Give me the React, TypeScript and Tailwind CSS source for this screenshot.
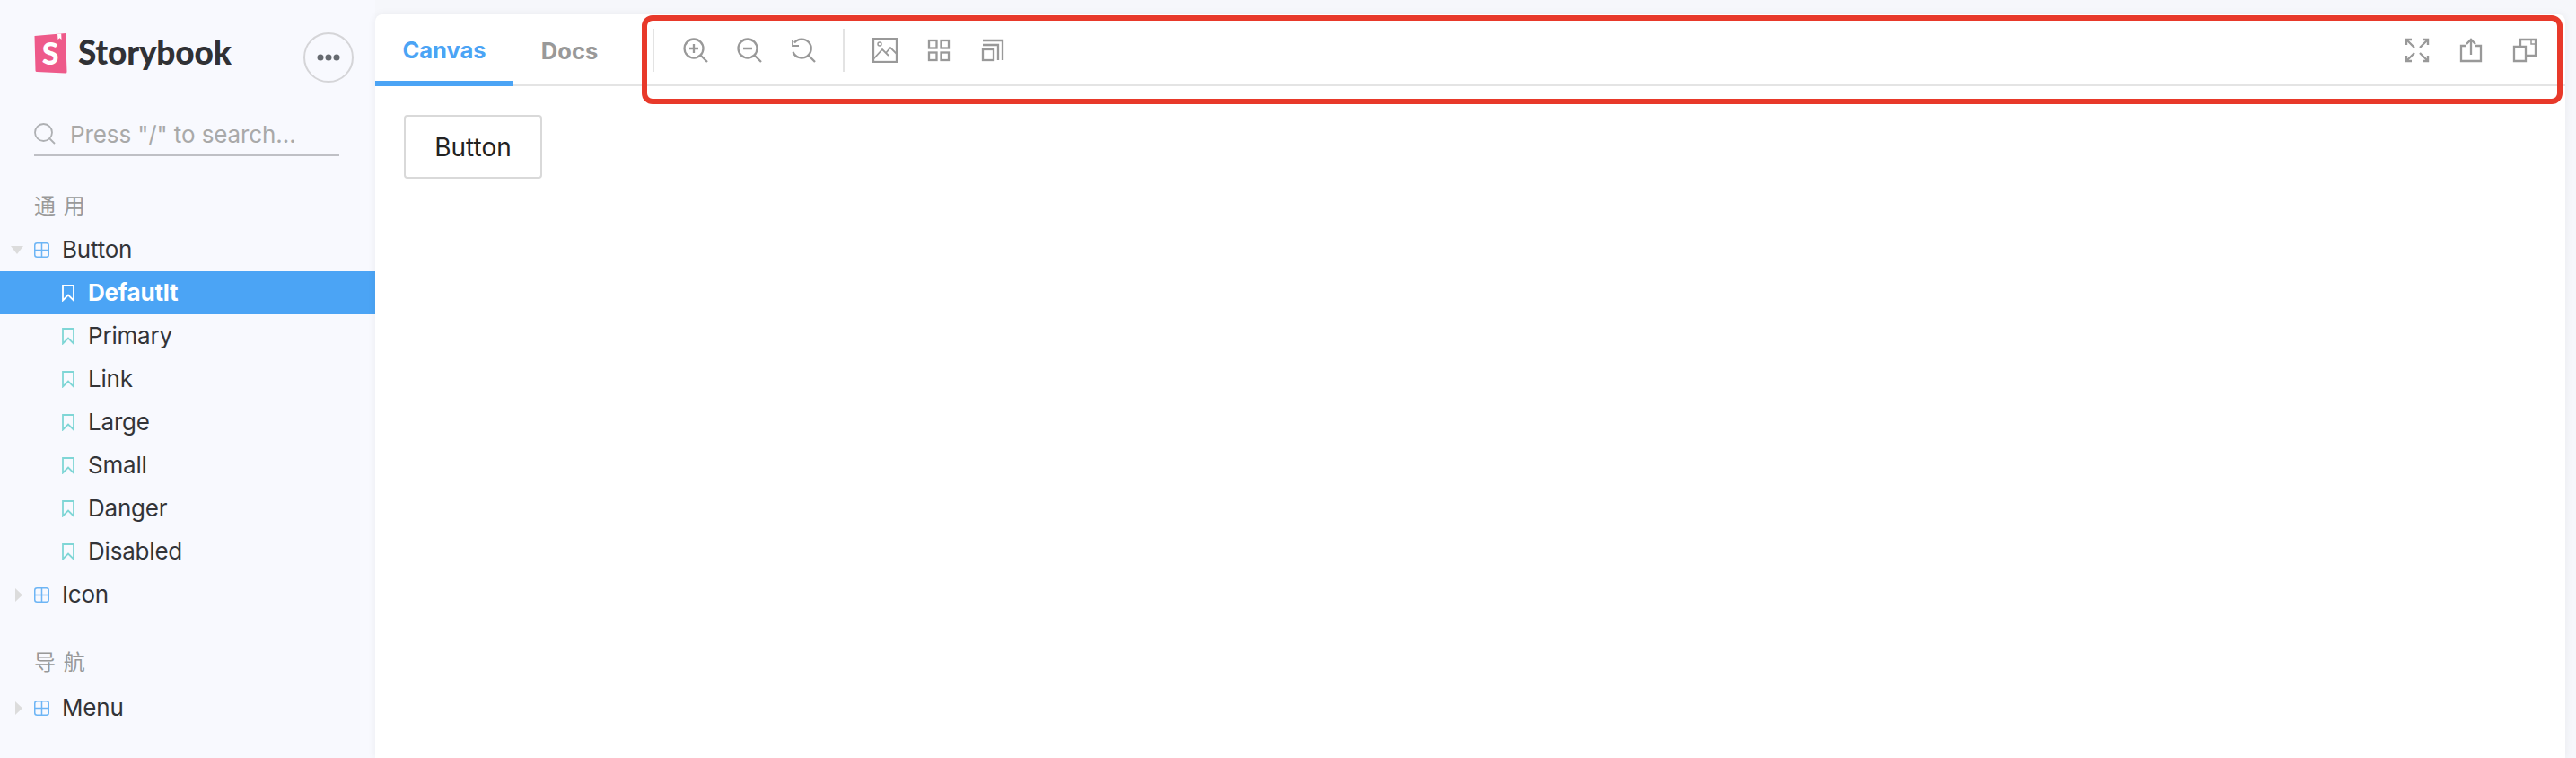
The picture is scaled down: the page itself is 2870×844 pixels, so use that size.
import type { ReactNode } from 'react'

const STORIES = ['Primary', 'Link', 'Large', 'Small', 'Danger', 'Disabled']

function ToolIcon({ children }: { children: ReactNode }) {
  return (
    <svg width="28" height="28" viewBox="0 0 28 28" fill="none" stroke="#999999" strokeWidth="2.3" className="shrink-0">
      {children}
    </svg>
  )
}

function Logo() {
  return (
    <svg width="37" height="46" viewBox="0 0 37 46" className="shrink-0">
      <path d="M0.5 4 L35 1 L36.5 44 Q36.5 45.5 35 45.5 L3 44 Q1.5 44 1.5 42.5 Z" fill="#ee5a8a" />
      <path d="M26 1.8 L26.5 8 L28.5 6.2 L30.5 8 L30.2 1.4 Z" fill="#ffffff" />
      <text x="18" y="36" textAnchor="middle" fontSize="34" fontWeight="900" fill="#ffffff" fontFamily="Lato, sans-serif">S</text>
    </svg>
  )
}

function GridIcon() {
  return (
    <svg width="17" height="17" viewBox="0 0 17 17" fill="none" stroke="#6db5f5" strokeWidth="1.5" className="shrink-0">
      <rect x="0.75" y="0.75" width="15.5" height="15.5" rx="2.5" />
      <path d="M8.5 1V16M1 8.5H16" />
    </svg>
  )
}

function Bookmark({ color }: { color: string }) {
  return (
    <svg width="14" height="19" viewBox="0 0 14 19" fill="none" stroke={color} strokeWidth="1.8" className="shrink-0">
      <path d="M1 1H13V17.5L7 11.5L1 17.5Z" />
    </svg>
  )
}

function Caret({ open }: { open?: boolean }) {
  return (
    <div className="flex h-4 w-[38px] shrink-0 items-center justify-center">
      {open ? (
        <svg width="14" height="9" viewBox="0 0 14 9"><path d="M0 0H14L7 9Z" fill="#dcdcdc" /></svg>
      ) : (
        <svg width="8" height="15" viewBox="0 0 8 15" className="ml-[3px]"><path d="M0 0L8 7.5L0 15Z" fill="#dcdcdc" /></svg>
      )}
    </div>
  )
}

function GroupRow({ label, open }: { label: string; open?: boolean }) {
  return (
    <div className="flex h-12 items-center text-[26px] tracking-[-0.2px] text-[#333438]">
      <Caret open={open} />
      <GridIcon />
      <span className="ml-[14px] -translate-y-[1px]">{label}</span>
    </div>
  )
}

function StoryRow({ label, active }: { label: string; active?: boolean }) {
  return (
    <div className={`flex h-12 items-center pl-[69px] text-[26px] tracking-[-0.2px] ${active ? 'bg-[#4ba4f5] font-bold text-white' : 'text-[#333438]'}`}>
      <Bookmark color={active ? '#ffffff' : '#7fd6d6'} />
      <span className="ml-[15px] -translate-y-[1px]">{label}</span>
    </div>
  )
}

function Heading({ label }: { label: string }) {
  return (
    <div className="pl-[38px] text-[24px] leading-[32px] tracking-[1px] text-[#999999]">{label}</div>
  )
}

function Sidebar() {
  return (
    <aside className="h-full w-[418px] shrink-0 bg-[#f8f9fe]">
      <div className="flex h-[92px] items-start pl-[38px] pr-[24px] pt-[36px]">
        <Logo />
        <span className="ml-[12px] font-['Lato'] text-[37px] font-black leading-[44px] tracking-[-0.2px] text-[#303135]">Storybook</span>
        <div className="ml-auto flex h-[56px] w-[56px] items-center justify-center rounded-full border-2 border-[#d5d5d8]">
          <svg width="26" height="8" viewBox="0 0 26 8" fill="#666a70">
            <circle cx="4" cy="4" r="3.5" /><circle cx="13" cy="4" r="3.5" /><circle cx="22" cy="4" r="3.5" />
          </svg>
        </div>
      </div>
      <div className="mx-[38px] mt-[32px] flex h-[50px] w-[340px] items-center border-b-2 border-[#bfc0c5] pt-[4px] pb-[2px]">
        <svg width="24" height="24" viewBox="0 0 24 24" fill="none" stroke="#aeb0b3" strokeWidth="1.8" className="shrink-0">
          <circle cx="10.5" cy="10.5" r="9.5" /><path d="M17.5 17.5L23 23" />
        </svg>
        <span className="ml-[16px] text-[26px] tracking-[-0.1px] text-[#a9a9a9]">Press "/" to search...</span>
      </div>
      <div className="mt-[40px]"><Heading label="通 用" /></div>
      <div className="mt-[8px]">
        <GroupRow label="Button" open />
        <StoryRow label="Defautlt" active />
        {STORIES.map(s => <StoryRow key={s} label={s} />)}
        <GroupRow label="Icon" />
      </div>
      <div className="mt-[36px]"><Heading label="导 航" /></div>
      <div className="mt-[10px]">
        <GroupRow label="Menu" />
      </div>
    </aside>
  )
}

function Toolbar() {
  return (
    <div className="flex flex-1 items-center pr-[31px] pt-[2px]">
      <div className="ml-[30px] h-12 w-[2px] bg-[#e3e3e3]" />
      <div className="ml-[32px] flex gap-[32px]">
        <ToolIcon>
          <circle cx="12" cy="12" r="10.5" /><path d="M19.5 19.5L27 27M7 12H17M12 7V17" />
        </ToolIcon>
        <ToolIcon>
          <circle cx="12" cy="12" r="10.5" /><path d="M19.5 19.5L27 27M7 12H17" />
        </ToolIcon>
        <ToolIcon>
          <path d="M4 5.5A10.5 10.5 0 1 1 2.5 16" /><path d="M2 2V9H9" strokeWidth="1.8" /><path d="M19.5 19.5L27 27" />
        </ToolIcon>
      </div>
      <div className="ml-[30px] h-12 w-[2px] bg-[#e3e3e3]" />
      <div className="ml-[31px] flex gap-[32px]">
        <ToolIcon>
          <rect x="1" y="1" width="26" height="26" />
          <circle cx="8" cy="7" r="2" strokeWidth="1.5" />
          <path d="M1 24L11 13L18 20M15 17L20 11L27 18" strokeWidth="1.8" />
        </ToolIcon>
        <ToolIcon>
          <rect x="3" y="3" width="8.5" height="8.5" /><rect x="16.5" y="3" width="8.5" height="8.5" />
          <rect x="3" y="16.5" width="8.5" height="8.5" /><rect x="16.5" y="16.5" width="8.5" height="8.5" />
        </ToolIcon>
        <ToolIcon>
          <rect x="3" y="13" width="12" height="12" /><path d="M3 8H20V25M3 3H25V25" />
        </ToolIcon>
      </div>
      <div className="ml-auto flex gap-[32px]">
        <ToolIcon>
          <path d="M2 2L11 11M26 2L17 11M2 26L11 17M26 26L17 17" /><path d="M2 8V2H8M20 2H26V8M2 20V26H8M26 20V26H20" strokeWidth="2.4" />
        </ToolIcon>
        <ToolIcon>
          <path d="M9 9H3V26H25V9H19M14 19V2M9 7L14 2L19 7" />
        </ToolIcon>
        <ToolIcon>
          <path d="M2 10H15V26H2ZM9 10V2H26V20H15M15 10H9" /><path d="M21 2V7H26" strokeWidth="1.5" />
        </ToolIcon>
      </div>
    </div>
  )
}

export default function App() {
  return (
    <div className="relative flex h-[844px] w-[2870px] overflow-hidden bg-[#f6f7fb] font-['Inter','Noto_Sans_CJK_SC',sans-serif]">
      <Sidebar />
      <main className="mr-3 mt-4 flex-1 rounded-t-[8px] bg-white shadow-[0_0_10px_rgba(0,0,0,0.06)]">
        <div className="flex h-[80px] border-b-2 border-[#e4e4e4]">
          <div className="-mb-[2px] flex h-[80px] w-[154px] items-center justify-center border-b-[6px] border-[#4ba4f5] pt-[7px] text-[25.5px] font-bold text-[#4ba4f5]">Canvas</div>
          <div className="flex h-[78px] w-[125px] items-center justify-center pt-[4px] text-[25.5px] font-bold text-[#999999]">Docs</div>
          <Toolbar />
        </div>
        <div className="pl-[32px] pt-[32px]">
          <button className="flex h-[71px] w-[154px] items-center justify-center rounded-[4px] border-2 border-[#d9d9d9] text-[28px] text-[#222222]">Button</button>
        </div>
      </main>
      {/* annotation drawn on top of the screenshot */}
      <div className="absolute left-[715px] top-[17px] h-[99px] w-[2140px] rounded-[12px] border-[6px] border-[#e8392a]" />
    </div>
  )
}
